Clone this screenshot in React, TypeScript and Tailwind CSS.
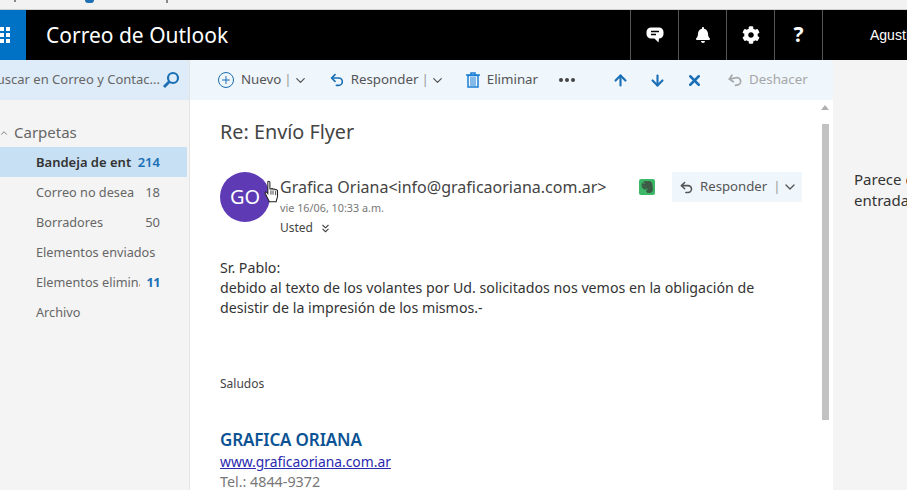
import { ChevronDown, Plus, Undo2, ArrowUp, ArrowDown, X, ChevronUp, ChevronsDown } from 'lucide-react';
import { FaBell, FaCog } from 'react-icons/fa';

const folders = [
  { name: 'Correo no desea', count: '18' },
  { name: 'Borradores', count: '50' },
  { name: 'Elementos enviados', count: '' },
  { name: 'Elementos elimina', count: '11', bold: true },
  { name: 'Archivo', count: '' },
];

function Cursor() {
  return (
    <svg className="absolute left-[263px] top-[180px]" width="18" height="24" viewBox="0 0 16 23">
      <path
        d="M4 1.500c1-.8 2 0 2 1v6l1 .2c.5-.6 1.500-.6 2 .2.6-.5 1.600-.4 2 .4.7-.4 2-.1 2.300 1v5c0 2-1 3-1.300 5.500H5.500L1.500 13c-.6-1 .5-2 1.500-1.200l1 1.200z"
        fill="#fff"
        stroke="#222"
        strokeWidth="1"
      />
      <path d="M7 10v4M9 10v4M11.500 10.500v4" stroke="#222" strokeWidth="0.8" />
    </svg>
  );
}

export default function App() {
  return (
    <div className="relative flex h-[490px] w-[907px] flex-col overflow-hidden bg-[#f4f4f4] font-['Noto_Sans','Open_Sans',sans-serif]">
      {/* Browser strip */}
      <div className="flex h-[10px] shrink-0 border-b border-[#d0d0d0] bg-[#f2f2f2]">
        <div className="ml-[14px] h-[2px] w-[2px] bg-[#888]" />
        <div className="ml-[69px] h-[3px] w-[9px] rounded-b-full bg-[#1f6fb5]" />
        <div className="ml-[72px] h-[3px] w-[2px] bg-[#888]" />
      </div>

      {/* Header */}
      <div className="flex h-[50px] shrink-0 items-center bg-black text-white">
        <div className="flex h-full w-[26px] items-center justify-end bg-[#0072c6] pr-[16px]">
          <div className="grid grid-cols-2 gap-[2px]">
            {[0, 1, 2, 3, 4, 5].map((i) => (
              <div key={i} className="h-[4px] w-[4px] bg-white" />
            ))}
          </div>
        </div>
        <div className="ml-[20px] text-[21px] leading-none">Correo de Outlook</div>
        <div className="ml-auto flex h-full">
          <div className="flex w-[48px] items-center justify-center border-l border-[#555]">
            <svg width="18" height="18" viewBox="0 0 18 18">
              <path d="M5 1.500h8a4.500 4.500 0 0 1 4.500 4.500v2a4.500 4.500 0 0 1-4.500 4.500l-.5 4-4-4H5A4.500 4.500 0 0 1 .5 8V6A4.500 4.500 0 0 1 5 1.500z" fill="#fff" />
              <path d="M5 5.500h8M5 8.500h5" stroke="#000" strokeWidth="1.500" />
            </svg>
          </div>
          <div className="flex w-[48px] items-center justify-center border-l border-[#555]">
            <FaBell size={16} />
          </div>
          <div className="flex w-[48px] items-center justify-center border-l border-[#555]">
            <FaCog size={18} />
          </div>
          <div className="flex w-[48px] items-center justify-center border-l border-[#555] text-[21px] font-bold">?</div>
          <div className="flex w-[85px] items-center border-l border-[#555] pl-[47px] font-['Liberation_Sans',sans-serif] text-[14px]">
            Agustín
          </div>
        </div>
      </div>

      <div className="flex min-h-0 flex-1">
        {/* Sidebar */}
        <div className="w-[190px] shrink-0 border-r border-[#e4e4e4]">
          <div className="flex h-[40px] items-center justify-end overflow-hidden bg-[#deecf9] pr-[9px]">
            <span className="whitespace-nowrap text-[13px] text-[#666]">uscar en Correo y Contac...</span>
            <svg width="18" height="18" viewBox="0 0 18 18" className="ml-[2px] shrink-0">
              <circle cx="11" cy="7" r="5" fill="none" stroke="#1a6fb5" strokeWidth="2.200" />
              <path d="M7.500 10.500L2 16" stroke="#1a6fb5" strokeWidth="2.800" />
            </svg>
          </div>
          <div className="relative mt-[19px] flex h-[27px] items-center pl-[14px] text-[15px] text-[#666]">
            <ChevronUp size={10} className="absolute -left-[1px] top-[9px]" />
            Carpetas
          </div>
          <div className="mt-[1px] flex h-[30px] w-[187px] items-center justify-between bg-[#c7e0f4] pl-[36px] pr-[27px] pt-[1px] text-[13px] font-semibold text-[#333]">
            <span>Bandeja de ent</span>
            <span className="text-[#1a6fb5]">214</span>
          </div>
          {folders.map((f) => (
            <div key={f.name} className="flex h-[30px] w-[187px] items-center justify-between pl-[36px] pr-[27px] pt-[1px] text-[12.700px] text-[#666]">
              <span className={f.count ? 'w-[104px] overflow-hidden whitespace-nowrap' : 'whitespace-nowrap'}>{f.name}</span>
              {f.count && <span className={f.bold ? 'font-bold tracking-[-0.5px] text-[#1a6fb5]' : 'text-[13px]'}>{f.count}</span>}
            </div>
          ))}
        </div>

        {/* Main */}
        <div className="flex w-[643px] shrink-0 flex-col">
          <div className="flex h-[40px] shrink-0 items-center bg-[#eff6fc] text-[13.300px] text-[#555]">
            <div className="ml-[28px] flex items-center">
              <span className="flex h-[16px] w-[16px] items-center justify-center rounded-full border border-[#1a6fb5] text-[#1a6fb5]">
                <Plus size={12} />
              </span>
              <span className="ml-[7px]">Nuevo</span>
              <span className="ml-[3px] text-[#999]">|</span>
              <ChevronDown size={15} className="ml-[1px]" />
            </div>
            <div className="ml-[21px] flex items-center">
              <Undo2 size={16} strokeWidth={2.500} className="text-[#1a6fb5]" />
              <span className="ml-[6px]">Responder</span>
              <span className="ml-[3px] text-[#999]">|</span>
              <ChevronDown size={15} className="ml-[1px]" />
            </div>
            <div className="ml-[21px] flex items-center">
              <svg width="14" height="16" viewBox="0 0 14 16" fill="none" stroke="#1a7fd4">
                <path d="M0 3h14M5 3V1h4v2" strokeWidth="1.500" />
                <path d="M2 3.500h10V15H2z" strokeWidth="1.500" />
                <path d="M5 5v9M7 5v9M9 5v9" strokeWidth="1" />
              </svg>
              <span className="ml-[7px]">Eliminar</span>
            </div>
            <div className="ml-[21px] flex gap-[2px]">
              <i className="h-[4px] w-[4px] rounded-full bg-[#444]" />
              <i className="h-[4px] w-[4px] rounded-full bg-[#444]" />
              <i className="h-[4px] w-[4px] rounded-full bg-[#444]" />
            </div>
            <ArrowUp size={17} strokeWidth={3} className="ml-[37px] text-[#1a6fb5]" />
            <ArrowDown size={17} strokeWidth={3} className="ml-[20px] text-[#1a6fb5]" />
            <X size={17} strokeWidth={3.500} className="ml-[20px] text-[#1a6fb5]" />
            <div className="ml-[24px] flex items-center text-[#a6a6a6]">
              <Undo2 size={16} strokeWidth={2.500} className="-rotate-12" />
              <span className="ml-[6px]">Deshacer</span>
            </div>
          </div>

          <div className="relative min-h-0 flex-1 overflow-hidden bg-white pl-[30px]">
            <div className="absolute right-[4px] top-[24px] h-[296px] w-[7px] bg-[#c2c2c2]" />
            <div className="absolute right-[4px] top-[5px] h-0 w-0 border-x-[4px] border-b-[5px] border-x-transparent border-b-[#b0b0b0]" />
            <div className="mt-[19px] text-[19.800px] leading-[26px] text-[#444]">Re: Envío Flyer</div>

            <div className="mt-[27px] flex">
              <div className="flex h-[50px] w-[50px] shrink-0 items-center justify-center rounded-full bg-[#5e3ab5] text-[20px] text-white">GO</div>
              <div className="ml-[10px] w-[522px]">
                <div className="flex items-start justify-between">
                  <div className="pt-[4px]">
                    <div className="text-[16px] leading-[22px] text-[#444]">Grafica Oriana&lt;info@graficaoriana.com.ar&gt;</div>
                    <div className="mt-[2px] text-[10.800px] leading-[16px] text-[#777]">vie 16/06, 10:33 a.m.</div>
                    <div className="mt-[4px] flex items-center text-[12px] leading-[16px] text-[#444]">
                      Usted
                      <ChevronsDown size={13} className="ml-[6px]" />
                    </div>
                  </div>
                  <div className="flex items-center">
                    <svg width="16" height="16" viewBox="0 0 16 16" className="mr-[17px] rounded-[2px] bg-[#3cb868]">
                      <path d="M3 5l2-2.500h5.500c1.500 0 2.300 1 2.500 3l.5 5.500c0 1.500-1 2.500-2.500 2.500H9c-1 0-1.500-.8-1.300-1.800.2-.9 1.300-1 2-.7M3 5h3V2.500M3 5c0 3 .5 4.500 2.500 5H8" fill="#3d5a45" stroke="#3d5a45" strokeWidth="0.8" />
                    </svg>
                    <div className="flex h-[30px] w-[130px] items-center bg-[#eff6fc] pl-[7px] text-[13.200px] text-[#555]">
                      <Undo2 size={15} strokeWidth={2.500} />
                      <span className="ml-[6px]">Responder</span>
                      <span className="ml-[6px] text-[#999]">|</span>
                      <ChevronDown size={16} className="ml-[2px]" />
                    </div>
                  </div>
                </div>
              </div>
            </div>

            <div className="mt-[22px] text-[14.200px] leading-[20px] text-[#333]">
              <div>Sr. Pablo:</div>
              <div>debido al texto de los volantes por Ud. solicitados nos vemos en la obligación de</div>
              <div>desistir de la impresión de los mismos.-</div>
            </div>
            <div className="mt-[58px] text-[12px] leading-[16px] text-[#444]">Saludos</div>
            <div className="mt-[36px] text-[17px] font-semibold leading-[24px] tracking-[-0.15px] text-[#0b5394]">GRAFICA ORIANA</div>
            <div className="text-[13.850px] leading-[20px] text-[#2a2ab0] underline">www.graficaoriana.com.ar</div>
            <div className="text-[14.300px] leading-[20px] text-[#777]">Tel.: 4844-9372</div>
          </div>
        </div>

        {/* Right pane */}
        <div className="min-w-0 flex-1 overflow-hidden pl-[21px] pt-[109px] text-[15px] leading-[21px] text-[#333]">
          <div className="whitespace-nowrap">Parece que</div>
          <div className="whitespace-nowrap">entrada</div>
        </div>
      </div>

      <Cursor />
    </div>
  );
}
